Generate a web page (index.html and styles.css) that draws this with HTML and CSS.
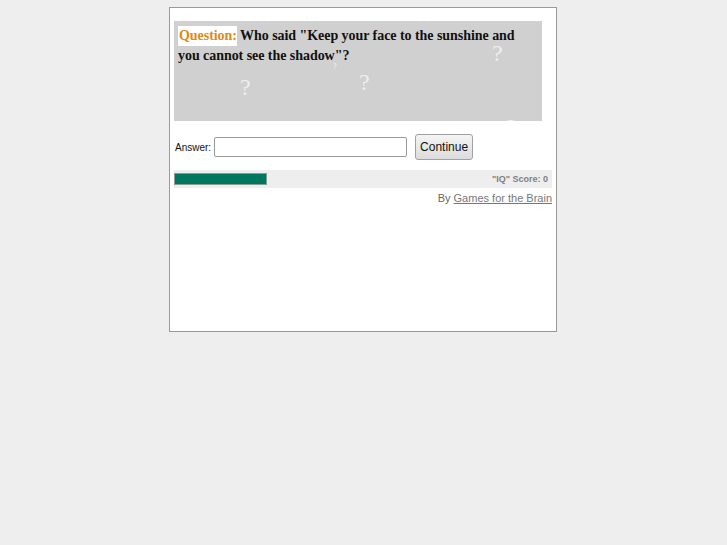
FILE: index.html
```html
<!DOCTYPE html>
<html>
<head>
<meta charset="utf-8">
<link rel="stylesheet" href="styles.css">
</head>
<body>
<div class="game">
  <div class="question">
    <span class="qm q1">?</span>
    <span class="qm q2">?</span>
    <span class="qm q3">?</span>
    <span class="qm q4">?</span>
    <span class="qm q5">?</span>
    <p class="qtext"><span class="qlabel">Question:</span> Who said "Keep your face to the sunshine and you cannot see the shadow"?</p>
  </div>
  <div class="answer-row">
    <label class="answer-label">Answer:</label>
    <input class="answer-input" type="text">
    <button class="btn">Continue</button>
  </div>
  <div class="progress">
    <div class="bar"></div>
    <span class="score">"IQ" Score: 0</span>
  </div>
  <div class="credit">By <a href="#">Games for the Brain</a></div>
</div>
</body>
</html>
```
FILE: styles.css
```css
html, body {
  margin: 0;
  padding: 0;
  background: #eeeeee;
}
body {
  padding-right: 1px;
}
.game {
  box-sizing: border-box;
  width: 388px;
  height: 325px;
  margin: 7px auto 0;
  background: #ffffff;
  border: 1px solid #999999;
  padding: 13px 4px 0 4px;
  font-family: "Liberation Sans", Arial, sans-serif;
}
.question {
  position: relative;
  width: 368px;
  height: 100px;
  background: #d0d0d0;
  box-sizing: border-box;
  padding: 5px 4px 0 4px;
  overflow: hidden;
}
.qtext {
  position: relative;
  margin: 0;
  font-family: "Liberation Serif", "Times New Roman", serif;
  font-weight: bold;
  font-size: 14px;
  line-height: 20px;
  letter-spacing: -0.05px;
  color: #111;
}
.qlabel {
  background: #ffffff;
  color: #e08a14;
  padding: 0 0 0 1px;
  display: inline-block;
  line-height: 20px;
}
.qm {
  position: absolute;
  font-family: "Liberation Serif", "Times New Roman", serif;
  font-size: 24px;
  line-height: 24px;
  color: #eeeeee;
}
.q1 { left: 66px; top: 54px; }
.q2 { left: 185px; top: 49px; }
.q3 { left: 318px; top: 20px; }
.q4 { left: 159px; top: 42px; font-size: 8px; line-height: 8px; color: #f4f4f4; }
.q5 { left: 332px; top: 94px; }
.answer-row {
  display: flex;
  align-items: center;
  margin-top: 13px;
  height: 26px;
}
.answer-label {
  font-size: 10px;
  color: #111;
  margin-left: 1px;
  margin-right: 3px;
}
.answer-input {
  box-sizing: border-box;
  width: 193px;
  height: 20px;
  border: 1px solid #9a9a9a;
  border-radius: 2px;
  padding: 0;
  margin: 0 8px 0 0;
  background: #fff;
}
.btn {
  box-sizing: border-box;
  width: 58px;
  height: 26px;
  padding: 0;
  border: 1px solid #a0a0a0;
  border-radius: 3px;
  background: linear-gradient(#f4f4f4, #dcdcdc);
  font-family: "Liberation Sans", Arial, sans-serif;
  font-size: 12px;
  color: #111;
}
.progress {
  display: flex;
  align-items: center;
  justify-content: space-between;
  margin-top: 10px;
  height: 18px;
  background: #eeeeee;
}
.bar {
  box-sizing: border-box;
  width: 93px;
  height: 12px;
  background: #00775f;
  border: 1px solid #8a9e98;
}
.score {
  font-size: 9px;
  font-weight: bold;
  color: #808080;
  margin-right: 4px;
}
.credit {
  text-align: right;
  font-size: 11px;
  color: #666666;
  margin-top: 4px;
}
.credit a {
  color: #777777;
}
```
